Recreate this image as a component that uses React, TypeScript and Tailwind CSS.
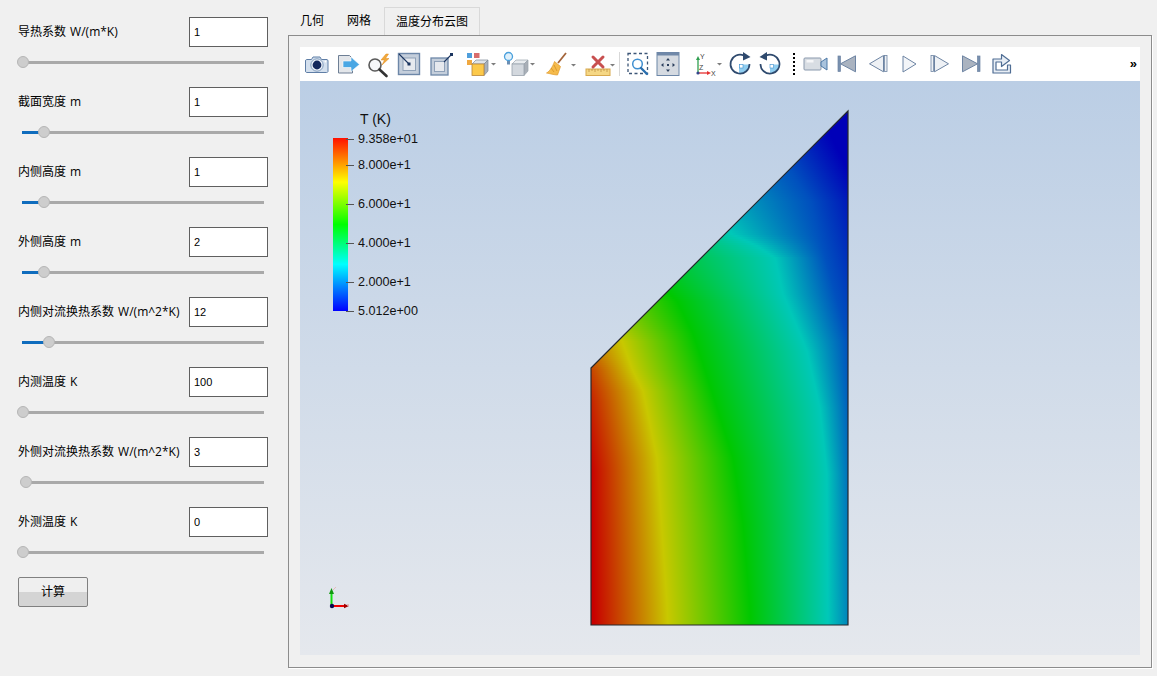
import { ReactNode } from "react";

const params = [
  { label: "导热系数 W/(m*K)", value: "1", pos: 1 },
  { label: "截面宽度 m", value: "1", pos: 22 },
  { label: "内侧高度 m", value: "1", pos: 22 },
  { label: "外侧高度 m", value: "2", pos: 22 },
  { label: "内侧对流换热系数 W/(m^2*K)", value: "12", pos: 27 },
  { label: "内测温度 K", value: "100", pos: 1 },
  { label: "外侧对流换热系数 W/(m^2*K)", value: "3", pos: 4 },
  { label: "外测温度 K", value: "0", pos: 1 },
];

const Slider = ({ pos }: { pos: number }) => (
  <div className="relative mt-[8px] ml-[4px] h-[14px] w-[242px]">
    <div className="absolute top-[6px] left-0 h-[3px] w-full bg-[#a9a9a9]" />
    <div className="absolute top-[6px] left-0 h-[3px] bg-[#0f6cbd]" style={{ width: pos }} />
    <div
      className="absolute top-[1px] h-[12px] w-[12px] rounded-full border border-[#b5b5b5] bg-[#cdcdcd]"
      style={{ left: pos - 6 }}
    />
  </div>
);

const Param = ({ label, value, pos }: { label: string; value: string; pos: number }) => (
  <div className="flex h-[70px] flex-col">
    <div className="flex h-[30px] items-center justify-between">
      <span className="text-[12px] [word-spacing:1px] whitespace-nowrap text-black">{label}</span>
      <input
        readOnly
        value={value}
        className="h-[30px] w-[79px] border border-[#5f5f5f] bg-white pl-[4px] font-['Liberation_Sans',sans-serif] text-[11px] text-black outline-none"
      />
    </div>
    <Slider pos={pos} />
  </div>
);

const Tool = ({ className, children }: { className: string; children: ReactNode }) => (
  <div className={`flex justify-center ${className}`}>{children}</div>
);

const Ico = ({ children }: { children: ReactNode }) => (
  <svg width="26" height="26" viewBox="0 0 26 26" className="overflow-visible">
    {children}
  </svg>
);

const Drop = ({ x, y = 12 }: { x: number; y?: number }) => (
  <path d={`M${x} ${y}h5l-2.5 2.5z`} fill="#7d7d7d" />
);

const stroke = "#5f7ea6";

const iconCamera = (
  <Ico>
    <path d="M2.5 8.5h5l1.5-2.5h7l1.5 2.5h5.5a1.5 1.5 0 0 1 1 1.5v10.5a1.5 1.5 0 0 1-1.5 1h-20a1.5 1.5 0 0 1-1-1.5v-10a1.5 1.5 0 0 1 1-1.5z" fill="#d4e0ee" stroke={stroke} />
    <circle cx="13" cy="14" r="6.2" fill="#eef3f9" stroke="#7f9abb" />
    <circle cx="13" cy="14" r="4.4" fill="#14285c" />
    <circle cx="21.5" cy="10.5" r="0.9" fill="#fff" />
  </Ico>
);

const iconExport = (
  <Ico>
    <path d="M3.5 4.5h11l3 3v14.5h-14z" fill="#e3e6ea" stroke="#6e7f95" />
    <path d="M8 10h8v-4l8.5 7.500-8.500 7v-4h-8z" fill="#4aa7e4" stroke="#fff" strokeWidth="0.6" />
  </Ico>
);

const iconZoomBolt = (
  <Ico>
    <circle cx="9" cy="14" r="6" fill="#f7f8fa" stroke="#5a5a5a" strokeWidth="1.6" />
    <path d="M13.5 18.5l7 6.5" stroke="#333" strokeWidth="2.6" strokeLinecap="round" />
    <path d="M20 3l-5 6h3.500l-2.500 5 7-6.500h-3.500l3-4.500z" fill="#f2a93b" stroke="#df8b1f" strokeWidth="0.5" />
  </Ico>
);

const iconResetIn = (
  <Ico>
    <rect x="2.5" y="2.5" width="21" height="21" fill="#c4cedb" stroke="#6d87a8" strokeWidth="1.4" />
    <rect x="7" y="7" width="12.5" height="12.5" fill="#e6e9ee" stroke="#8fa1b8" />
    <path d="M3 3l10 10" stroke="#1b3560" strokeWidth="1.1" />
    <rect x="11.5" y="11.5" width="3" height="3" fill="#1b3560" />
  </Ico>
);

const iconResetOut = (
  <Ico>
    <rect x="4" y="7" width="17" height="17" fill="#c4cedb" stroke="#6d87a8" strokeWidth="1.3" />
    <rect x="7.5" y="10.5" width="10" height="10" fill="#e6e9ee" stroke="#8fa1b8" />
    <path d="M17 11l7-7" stroke="#1b3560" strokeWidth="1.1" />
    <rect x="23" y="2" width="3" height="3" fill="#1b3560" />
  </Ico>
);

const iconCubeColor = (
  <Ico>
    <rect x="3" y="2" width="5" height="5" fill="#4f9fdc" />
    <rect x="10" y="2" width="5.5" height="5" fill="#d86d6d" />
    <rect x="3" y="9" width="5" height="5" fill="#f0a840" />
    <path d="M8 13l4-4h12l-4 4z" fill="#dfe3e8" stroke="#7c8896" strokeWidth="0.7" />
    <path d="M20 13l4-4v11l-4 4.500z" fill="#a8b0ba" stroke="#7c8896" strokeWidth="0.7" />
    <rect x="8" y="13" width="12" height="11.5" fill="#fcc94a" stroke="#b8863a" strokeWidth="0.8" />
    <Drop x={27} y={12} />
  </Ico>
);

const iconCubeBulb = (
  <Ico>
    <circle cx="4.5" cy="5.5" r="4" fill="#dff0fb" stroke="#4aa0dc" strokeWidth="1.3" />
    <path d="M3 10h3v3.500h-3z" fill="#6c8fb4" />
    <path d="M8 13l4-4h12l-4 4z" fill="#e9ecef" stroke="#9aa3ad" strokeWidth="0.7" />
    <path d="M20 13l4-4v11l-4 4.500z" fill="#a9afb7" stroke="#9aa3ad" strokeWidth="0.7" />
    <rect x="8" y="13" width="12" height="11.5" fill="#d3d8de" stroke="#9aa3ad" strokeWidth="0.8" />
    <Drop x={26} y={12} />
  </Ico>
);

const iconBroom = (
  <Ico>
    <path d="M21 2l-8 10" stroke="#a3643a" strokeWidth="1.8" />
    <path d="M9.500 10.500l6 5-3 8.500c-3 0-8-1.500-11-2 3-1.500 6-6 8-11.500z" fill="#f5bb4c" stroke="#e09a2c" strokeWidth="0.7" />
    <path d="M6 17l3 4M9 14l3 6" stroke="#d08a20" strokeWidth="0.7" />
    <Drop x={26} y={13} />
  </Ico>
);

const iconRuler = (
  <Ico>
    <rect x="1" y="18" width="24" height="6.5" fill="#f5d784" stroke="#d8a94e" />
    <path d="M4 18v3M7 18v2M10 18v3M13 18v2M16 18v3M19 18v2M22 18v3" stroke="#b8863a" strokeWidth="0.7" />
    <path d="M8 6l10 10M18 6l-10 10" stroke="#c85050" strokeWidth="3" strokeLinecap="round" />
    <Drop x={25} y={13} />
  </Ico>
);

const iconZoomBox = (
  <Ico>
    <rect x="3" y="2.500" width="19.500" height="20" fill="none" stroke="#3c5677" strokeWidth="1.3" strokeDasharray="3 2.500" />
    <circle cx="12.500" cy="13" r="4.800" fill="#fff" stroke="#3f8fd0" strokeWidth="1.500" />
    <path d="M16 17l6 6" stroke="#2a6fae" strokeWidth="2.400" strokeLinecap="round" />
  </Ico>
);

const iconCenter = (
  <Ico>
    <rect x="2" y="1.500" width="22" height="23" fill="#d5dae1" stroke="#6d87a8" />
    <rect x="2" y="1.500" width="22" height="3" fill="#7088a8" />
    <path d="M13 7l-2 2.500h4zM13 21l-2-2.500h4zM6 14l2.500-2v4zM20 14l-2.500-2v4z" fill="#2a3e5c" />
    <rect x="12" y="13" width="2" height="2" fill="#2a3e5c" />
  </Ico>
);

const iconAxes = (
  <Ico>
    <path d="M3 22v-14" stroke="#2f9e4f" strokeWidth="1.3" />
    <path d="M3 5l-2 4h4z" fill="#2f9e4f" />
    <path d="M3 22h11" stroke="#e53030" strokeWidth="1.3" />
    <path d="M16 22l-4-2v4z" fill="#e53030" />
    <circle cx="3" cy="22" r="1.600" fill="#33478c" />
    <text x="5" y="8" fontSize="7" fill="#444" fontFamily="Liberation Sans, sans-serif">Y</text>
    <text x="4" y="19" fontSize="7" fill="#444" fontFamily="Liberation Sans, sans-serif">Z</text>
    <text x="16" y="25" fontSize="7" fill="#444" fontFamily="Liberation Sans, sans-serif">X</text>
    <Drop x={22} y={12} />
  </Ico>
);

const iconRotCw = (
  <Ico>
    <path d="M12 13.500h10.500a9.500 9.500 0 0 1-10.500 9.500z" fill="#8fcdf0" />
    <rect x="12.500" y="13.500" width="3.500" height="3.500" fill="#fff" stroke="#3f8fd0" strokeWidth="0.6" />
    <path d="M17 4.500a9.500 9.500 0 1 0 5.500 8.500" fill="none" stroke="#2f4a6e" strokeWidth="1.700" />
    <path d="M16 1l7.500 5-7.500 3.500z" fill="#2f4a6e" />
  </Ico>
);

const iconRotCcw = (
  <Ico>
    <path d="M13 13.500h9.500a9.500 9.500 0 0 1-9.500 9.500z" fill="#8fcdf0" />
    <rect x="13" y="13.500" width="3.500" height="3.500" fill="#fff" stroke="#3f8fd0" strokeWidth="0.6" />
    <path d="M9 4.500a9.500 9.500 0 1 1-5.500 8.500" fill="none" stroke="#2f4a6e" strokeWidth="1.700" />
    <path d="M10 1l-7.500 5 7.500 3.500z" fill="#2f4a6e" />
  </Ico>
);

const iconVideo = (
  <Ico>
    <rect x="1" y="7" width="17" height="12" rx="1" fill="#d8dde3" stroke="#8a99ad" />
    <rect x="3.500" y="9" width="7" height="2.500" fill="#f5f6f8" />
    <path d="M18 11l6-4v12l-6-4z" fill="#a9c3dd" stroke="#4c78a6" />
  </Ico>
);

const navStroke = "#6d84a3";

const iconFirst = (
  <Ico>
    <rect x="4" y="5" width="2.500" height="15.500" fill="#7890ae" stroke={navStroke} strokeWidth="0.7" />
    <path d="M6.500 12.800l15-8v16z" fill="#aab3c0" stroke={navStroke} />
  </Ico>
);

const iconPrev = (
  <Ico>
    <path d="M18.500 4.500l-14 8.300 14 8z" fill="#eef1f5" stroke={navStroke} />
    <rect x="19.500" y="4.500" width="2.500" height="16" fill="#eef1f5" stroke={navStroke} strokeWidth="0.8" />
  </Ico>
);

const iconPlay = (
  <Ico>
    <path d="M7 5l13 8-13 8z" fill="#f3f5f8" stroke={navStroke} />
  </Ico>
);

const iconNext = (
  <Ico>
    <rect x="4" y="4.500" width="2.500" height="16" fill="#eef1f5" stroke={navStroke} strokeWidth="0.8" />
    <path d="M7.500 4.500l14 8.300-14 8z" fill="#eef1f5" stroke={navStroke} />
  </Ico>
);

const iconLast = (
  <Ico>
    <path d="M4.500 4.800l15 8-15 8z" fill="#aab3c0" stroke={navStroke} />
    <rect x="19.500" y="5" width="2.500" height="15.500" fill="#7890ae" stroke={navStroke} strokeWidth="0.7" />
  </Ico>
);

const iconLoop = (
  <Ico>
    <path d="M4 8h8.500V3.500l8 6-8 6V11H7v8h11.500v-5h3v8H4z" fill="#e8eef5" stroke="#4f6d94" strokeWidth="1.200" strokeLinejoin="round" />
  </Ico>
);

type Tb = [number, number][];

const at = (t: Tb, y: number) => {
  for (let i = 1; i < t.length; i++) {
    if (y <= t[i][0]) {
      const [y0, x0] = t[i - 1];
      const [y1, x1] = t[i];
      return x0 + ((x1 - x0) * (y - y0)) / (y1 - y0);
    }
  }
  return t[t.length - 1][1];
};

// isotherm x positions read off the plot, by screen y
const iso: { color: string; t: Tb }[] = [
  { color: "#c80000", t: [[111, 300], [368, 570], [400, 580], [470, 591], [625, 594]] },
  { color: "#c8c800", t: [[111, 400], [340, 622], [370, 633], [390, 643], [457, 657], [603, 667], [625, 668]] },
  { color: "#00c800", t: [[111, 480], [300, 677], [333, 693], [363, 703], [407, 717], [457, 733], [523, 743], [607, 750], [625, 751]] },
  { color: "#00c8b8", t: [[111, 600], [200, 700], [233, 732], [245, 757], [257, 775], [293, 783], [340, 803], [350, 807], [407, 820], [473, 827], [625, 828]] },
  { color: "#0050be", t: [[111, 735], [150, 778], [200, 810], [340, 848], [400, 852], [625, 864]] },
  { color: "#0000b8", t: [[111, 820], [150, 838], [200, 865], [340, 905], [625, 950]] },
];

const rows: number[] = [];
for (let y = 111; y < 626; y += 2) rows.push(y);

const ContourPlot = () => (
  <svg className="absolute inset-0 h-full w-full" viewBox="300 81 840 574">
    <defs>
      <clipPath id="shape">
        <polygon points="591,368 848,111 848,625 591,625" />
      </clipPath>
      {rows.map((y) => (
        <linearGradient key={y} id={`row${y}`} gradientUnits="userSpaceOnUse" x1="300" x2="1000" y1="0" y2="0">
          {iso.map((s) => (
            <stop key={s.color} offset={(at(s.t, y) - 300) / 700} stopColor={s.color} />
          ))}
        </linearGradient>
      ))}
    </defs>
    <g clipPath="url(#shape)">
      {rows.map((y) => (
        <rect key={y} x="591" y={y} width="258" height="2.2" fill={`url(#row${y})`} shapeRendering="crispEdges" />
      ))}
    </g>
    <polygon points="591,368 848,111 848,625 591,625" fill="none" stroke="#26282c" strokeWidth="1.2" />
    {/* orientation axes */}
    <path d="M331.500 606v-14" stroke="#10e010" strokeWidth="2" />
    <path d="M331.500 588l-2.500 6h5z" fill="#119911" />
    <path d="M332 606h14" stroke="#f00000" strokeWidth="2" />
    <path d="M349 606l-5-2.200v4.400z" fill="#a00000" />
    <circle cx="332" cy="606" r="2.200" fill="#0a0a50" />
    <path d="M333 590l3-3M347 604l2 2M349 604l-2 2" stroke="#e8a8a8" strokeWidth="0.7" />
  </svg>
);

const ticks = [
  { label: "9.358e+01", y: 58 },
  { label: "8.000e+1", y: 84 },
  { label: "6.000e+1", y: 123 },
  { label: "4.000e+1", y: 162 },
  { label: "2.000e+1", y: 201 },
  { label: "5.012e+00", y: 230 },
];

const Legend = () => (
  <>
    <div className="absolute top-[29px] left-[60px] font-['Liberation_Sans',sans-serif] text-[14px] leading-[18px] text-[#111]">T (K)</div>
    <div className="absolute top-[57px] left-[33px] h-[173px] w-[15px] bg-[linear-gradient(to_bottom,#ff1000_0%,#ffff00_25.500%,#00ff00_50%,#00ffff_73%,#0000ff_100%)]" />
    {ticks.map((t) => (
      <div key={t.label} className="absolute left-[46px] flex h-[16px] items-center" style={{ top: t.y - 8 }}>
        <div className="h-px w-[8px] bg-[#555]" />
        <span className="ml-[4px] font-['Liberation_Sans',sans-serif] text-[12.600px] leading-none text-[#111]">{t.label}</span>
      </div>
    ))}
  </>
);

export default function App() {
  return (
    <div className="flex h-[676px] w-[1157px] overflow-hidden bg-[#f0f0f0] font-['Open_Sans','Noto_Sans_CJK_SC',sans-serif]">
      <aside className="w-[288px] shrink-0 pt-[17px] pr-[20px] pl-[18px]">
        {params.map((p) => (
          <Param key={p.label} {...p} />
        ))}
        <button className="h-[30px] w-[70px] rounded-[2px] border border-[#808080] bg-[linear-gradient(to_bottom,#efefef_50%,#d4d4d4_50%)] text-[12px] text-black">
          计算
        </button>
      </aside>

      <main className="flex flex-1 flex-col pt-[7px] pr-[5px]">
        <div className="flex h-[28px] items-stretch text-[12px] text-black">
          <div className="flex w-[59px] items-center pl-[12px]">几何</div>
          <div className="flex w-[37px] items-center">网格</div>
          <div className="flex w-[96px] items-center justify-center border border-b-0 border-[#d9d9d9] bg-[#f0f0f0]">
            温度分布云图
          </div>
        </div>
        <div className="mb-[8px] flex flex-1 flex-col border border-[#8c8c8c] px-[11px] pt-[11px] pb-[12px] shadow-[1px_1px_0_#ffffff]">
          <div className="flex h-[34px] shrink-0 items-center bg-white pl-[2px]">
            <Tool className="w-[30px]">{iconCamera}</Tool>
            <Tool className="w-[32px]">{iconExport}</Tool>
            <Tool className="w-[29px]">{iconZoomBolt}</Tool>
            <Tool className="w-[32px]">{iconResetIn}</Tool>
            <Tool className="w-[30px]">{iconResetOut}</Tool>
            <Tool className="w-[44px]">{iconCubeColor}</Tool>
            <Tool className="w-[36px]">{iconCubeBulb}</Tool>
            <Tool className="w-[46px]">{iconBroom}</Tool>
            <Tool className="w-[34px]">{iconRuler}</Tool>
            <Tool className="w-[8px]">
              <div className="h-[24px] w-px bg-[#d8d8d8]" />
            </Tool>
            <Tool className="w-[29px]">{iconZoomBox}</Tool>
            <Tool className="w-[32px]">{iconCenter}</Tool>
            <Tool className="ml-[8px] w-[32px]">{iconAxes}</Tool>
            <Tool className="w-[31px]">{iconRotCw}</Tool>
            <Tool className="w-[30px]">{iconRotCcw}</Tool>
            <Tool className="w-[18px]">
              <div className="h-[23px] w-[2px] bg-[repeating-linear-gradient(to_bottom,#000000_0,#000000_2px,transparent_2px,transparent_4px)]" />
            </Tool>
            <Tool className="w-[26px]">{iconVideo}</Tool>
            <Tool className="ml-[2px] w-[32px]">{iconFirst}</Tool>
            <Tool className="w-[30px]">{iconPrev}</Tool>
            <Tool className="w-[32px]">{iconPlay}</Tool>
            <Tool className="w-[30px]">{iconNext}</Tool>
            <Tool className="w-[32px]">{iconLast}</Tool>
            <Tool className="w-[30px]">{iconLoop}</Tool>
            <span className="mr-[3px] ml-auto font-['Liberation_Sans',sans-serif] text-[13px] font-bold text-black">»</span>
          </div>
          <div className="relative flex-1 bg-[linear-gradient(to_bottom,#bbcee5,#e5e8ed)]">
            <ContourPlot />
            <Legend />
          </div>
        </div>
      </main>
    </div>
  );
}
